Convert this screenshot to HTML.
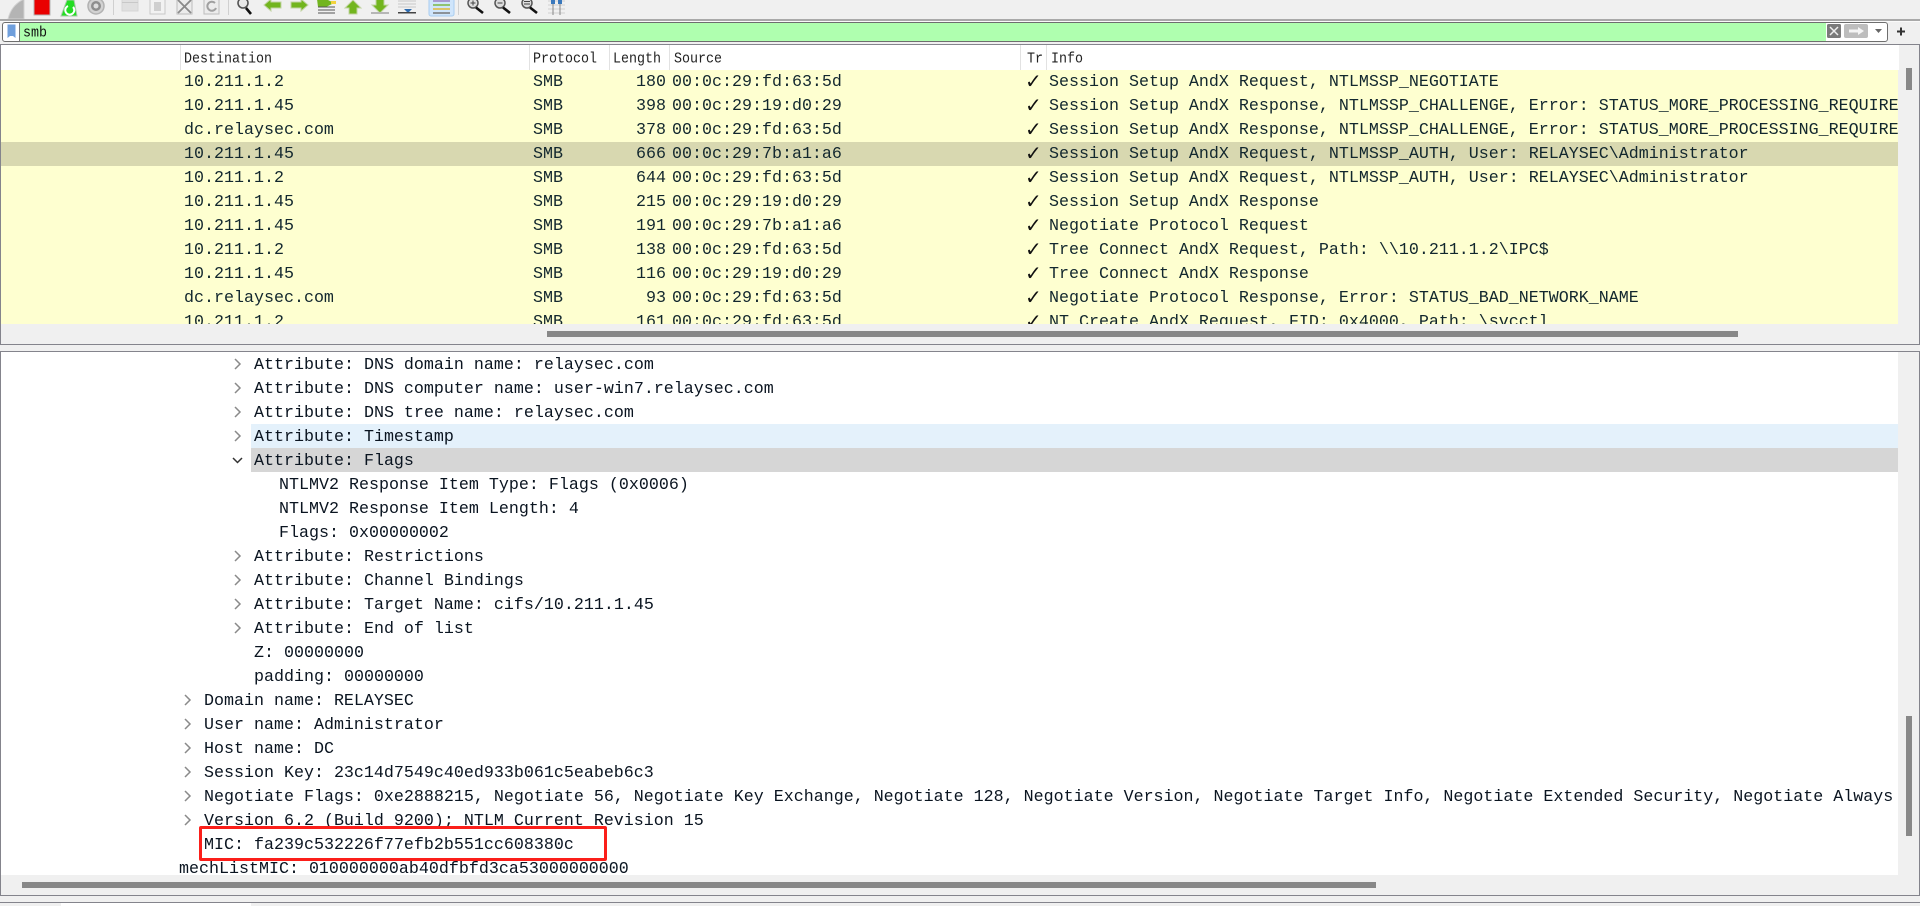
<!DOCTYPE html>
<html><head><meta charset="utf-8"><style>
html,body{margin:0;padding:0;width:1920px;height:906px;overflow:hidden;background:#f0f0f0}
*{box-sizing:border-box}
.a{position:absolute}
.t{position:absolute;font:16.667px/24px "Liberation Mono",monospace;color:#12272e;white-space:pre;height:24px}
.h{position:absolute;top:45px;height:25px;font:13.33px/29px "Liberation Mono",monospace;color:#222;white-space:pre;transform:scaleY(1.12)}
.s{position:absolute;top:45px;height:25px;width:1px;background:#e2e2e2}
.d{position:absolute;left:1px;font:16.667px/24px "Liberation Mono",monospace;color:#0a1420;white-space:pre;height:24px;margin-top:2px}
svg{position:absolute;overflow:visible}
</style></head><body>
<!-- toolbar -->
<svg class="a" style="left:0;top:0" width="600" height="20" viewBox="0 0 600 20">
<path d="M8 19C10 11 14 4 24 -1V19Z" fill="#b4b4b4" stroke="#d2d2d2"/>
<rect x="34" y="-2" width="16" height="17" fill="#e90000" stroke="#b5b5b5"/>
<path d="M61 16L67 0H74L77 16Z" fill="#22dd22" stroke="#a6c8a6"/>
<path d="M73 7a4.5 4.5 0 1 1-5-1" fill="none" stroke="#fff" stroke-width="2"/>
<circle cx="96" cy="6" r="8" fill="#d2d2d2" stroke="#b2b2b2" stroke-width="1.5"/><circle cx="96" cy="6" r="5" fill="#8e8e8e"/><circle cx="96" cy="6" r="2.5" fill="#ddd"/>
<rect x="113" y="-2" width="1" height="17" fill="#d0d0d0"/>
<path d="M122 -1H138V11H122Z" fill="#e0e0e0" stroke="#d6d6d6"/><rect x="122" y="2" width="16" height="1" fill="#c8c8c8"/>
<rect x="150" y="-1" width="15" height="15" fill="#f2f2f2" stroke="#c8c8c8"/>
<path d="M154 2h7v9h-7z" fill="#cfcfcf"/>
<rect x="177" y="-1" width="15" height="15" fill="#ececec" stroke="#bdbdbd"/><path d="M178 0L191 13M191 0L178 13" stroke="#8a8a8a" stroke-width="1.8"/>
<rect x="204" y="-1" width="15" height="15" fill="#ececec" stroke="#bdbdbd"/><path d="M215 3a4.5 4.5 0 1 0 1 5" fill="none" stroke="#a0a0a0" stroke-width="2"/>
<rect x="228" y="-2" width="1" height="17" fill="#d0d0d0"/>
<circle cx="243" cy="3" r="5" fill="#e8e8e8" stroke="#555" stroke-width="1.6"/><path d="M246 8L251 14" stroke="#111" stroke-width="2.6"/>
<path d="M264 5L271 -1V2H281V8H271V11Z" fill="#72b51e" stroke="#c2d4a4"/>
<path d="M308 5L301 -1V2H291V8H301V11Z" fill="#72b51e" stroke="#c2d4a4"/>
<path d="M317 -1H326V-1L334 3L326 7H318Z" fill="#72b51e"/><rect x="331" y="1" width="5" height="3" fill="#f2d23c"/>
<path d="M318 7H335M318 10H335M318 13H335" stroke="#555" stroke-width="1"/>
<path d="M353 0L361 8H357V14H349V8H345Z" fill="#72b51e" stroke="#c2d4a4"/>
<path d="M380 13L388 5H384V-1H376V5H372Z" fill="#72b51e" stroke="#c2d4a4"/><rect x="371" y="12" width="18" height="2" fill="#b6b6b6"/>
<path d="M398 1H416M398 4H416M398 7H416" stroke="#c8c8c8"/><path d="M404 9H412L408 13Z" fill="#2e6cb0"/><rect x="398" y="12" width="18" height="1.5" fill="#444"/>
<rect x="429" y="-2" width="25" height="18" rx="2" fill="#cfe5fb" stroke="#a8cdf0"/>
<path d="M433 1H450" stroke="#9a82c4" stroke-width="1.4"/><path d="M433 5H450" stroke="#7cb648" stroke-width="1.4"/><path d="M433 9H450" stroke="#e0b83a" stroke-width="1.4"/><path d="M433 13H450" stroke="#777" stroke-width="1.4"/>
<rect x="458" y="-2" width="1" height="17" fill="#d0d0d0"/>
<circle cx="473" cy="3" r="5" fill="#ddd" stroke="#555" stroke-width="1.5"/><path d="M476 7.5L483 13" stroke="#111" stroke-width="2.6"/><path d="M470.5 3H475.5M473 .5V5.5" stroke="#444"/>
<circle cx="500" cy="3" r="5" fill="#ddd" stroke="#555" stroke-width="1.5"/><path d="M503 7.5L510 13" stroke="#111" stroke-width="2.6"/><path d="M497.5 3H502.5" stroke="#444"/>
<circle cx="527" cy="3" r="5" fill="#ddd" stroke="#555" stroke-width="1.5"/><path d="M530 7.5L537 13" stroke="#111" stroke-width="2.6"/><path d="M524 1.5H530M524 4H530" stroke="#444"/>
<path d="M548 1H565M548 5H565M548 9H565M548 13H565" stroke="#cfcfcf"/><path d="M553 -1V15M560 -1V15" stroke="#888"/><rect x="551" y="-1" width="4" height="5" fill="#3a78bc"/><rect x="558" y="-1" width="4" height="5" fill="#3a78bc"/>
</svg>
<div class="a" style="left:0;top:19px;width:1920px;height:2px;background:#a9a9a9"></div>
<div class="a" style="left:0;top:21px;width:1920px;height:1px;background:#fafafa"></div>
<!-- filter bar -->
<div class="a" style="left:2px;top:22px;width:1886px;height:20px;border:1px solid #6e6e6e;border-radius:3px;background:#fff"></div>
<div class="a" style="left:20px;top:23px;width:1806px;height:18px;background:#afffaf"></div>
<div class="a" style="left:19px;top:23px;width:1px;height:18px;background:#777"></div>
<svg class="a" style="left:0;top:0" width="30" height="44"><path d="M7.5 24.5H15.5V38L13 36H10L7.5 38Z" fill="#6f9fdc"/></svg>
<div class="a" style="left:23px;top:24px;font:13.33px/19px 'Liberation Mono',monospace;color:#111;white-space:pre;transform:scaleY(1.12)">smb</div>
<svg class="a" style="left:0;top:0" width="1920" height="44">
<rect x="1827" y="24" width="14" height="14" rx="1.5" fill="#7a7a7a"/><path d="M1830 27L1838 35M1838 27L1830 35" stroke="#eee" stroke-width="1.5"/>
<rect x="1844" y="24" width="24" height="14" rx="2" fill="#bdbdbd"/><path d="M1849 29.5H1858V27L1864 31L1858 35V32.5H1849Z" fill="#f4f4f4"/>
<path d="M1875 29H1882L1878.5 33Z" fill="#666"/>
<path d="M1897 31.5H1905M1901 27.5V35.5" stroke="#333" stroke-width="2"/>
</svg>
<!-- packet list -->
<div class="a" style="left:0;top:44px;width:1920px;height:301px;border:1px solid #84848c;background:#f0f0f0"></div>
<div class="a" style="left:1px;top:45px;width:1898px;height:25px;background:#fff"></div>
<div class="a" style="left:1px;top:70px;width:1897px;height:254px;background:#feffd0;overflow:hidden"></div>
<div class="a" style="left:1px;top:142px;width:1897px;height:24px;background:#d8d8b0"></div>
<div class="a" style="left:1906px;top:68px;width:6px;height:22px;background:#888"></div>
<div class="a" style="left:547px;top:331px;width:1191px;height:6px;background:#888"></div>
<div class="s" style="left:180px"></div><div class="s" style="left:529px"></div><div class="s" style="left:609px"></div><div class="s" style="left:669px"></div><div class="s" style="left:1020px"></div><div class="s" style="left:1046px"></div>
<div class="h" style="left:184px">Destination</div>
<div class="h" style="left:533px">Protocol</div>
<div class="h" style="left:613px">Length</div>
<div class="h" style="left:674px">Source</div>
<div class="h" style="left:1027px">Tr</div>
<div class="h" style="left:1051px">Info</div>
<div class="a" style="left:0;top:70px;width:1898px;height:254px;overflow:hidden">
<style>.r{position:absolute;left:0;width:1898px;height:24px}.r .t{top:1px}.r .c{left:1025px;top:-1px;font-family:"DejaVu Sans",sans-serif;font-size:20px;color:#111}</style>
<div class="r" style="top:0"><span class="t" style="left:184px">10.211.1.2</span><span class="t" style="left:533px">SMB</span><span class="t" style="left:636px">180</span><span class="t" style="left:672px">00:0c:29:fd:63:5d</span><span class="t c">✓</span><span class="t" style="left:1049px">Session Setup AndX Request, NTLMSSP_NEGOTIATE</span></div>
<div class="r" style="top:24px"><span class="t" style="left:184px">10.211.1.45</span><span class="t" style="left:533px">SMB</span><span class="t" style="left:636px">398</span><span class="t" style="left:672px">00:0c:29:19:d0:29</span><span class="t c">✓</span><span class="t" style="left:1049px;width:849px;overflow:hidden">Session Setup AndX Response, NTLMSSP_CHALLENGE, Error: STATUS_MORE_PROCESSING_REQUIRED</span></div>
<div class="r" style="top:48px"><span class="t" style="left:184px">dc.relaysec.com</span><span class="t" style="left:533px">SMB</span><span class="t" style="left:636px">378</span><span class="t" style="left:672px">00:0c:29:fd:63:5d</span><span class="t c">✓</span><span class="t" style="left:1049px;width:849px;overflow:hidden">Session Setup AndX Response, NTLMSSP_CHALLENGE, Error: STATUS_MORE_PROCESSING_REQUIRED</span></div>
<div class="r" style="top:72px"><span class="t" style="left:184px">10.211.1.45</span><span class="t" style="left:533px">SMB</span><span class="t" style="left:636px">666</span><span class="t" style="left:672px">00:0c:29:7b:a1:a6</span><span class="t c">✓</span><span class="t" style="left:1049px">Session Setup AndX Request, NTLMSSP_AUTH, User: RELAYSEC\Administrator</span></div>
<div class="r" style="top:96px"><span class="t" style="left:184px">10.211.1.2</span><span class="t" style="left:533px">SMB</span><span class="t" style="left:636px">644</span><span class="t" style="left:672px">00:0c:29:fd:63:5d</span><span class="t c">✓</span><span class="t" style="left:1049px">Session Setup AndX Request, NTLMSSP_AUTH, User: RELAYSEC\Administrator</span></div>
<div class="r" style="top:120px"><span class="t" style="left:184px">10.211.1.45</span><span class="t" style="left:533px">SMB</span><span class="t" style="left:636px">215</span><span class="t" style="left:672px">00:0c:29:19:d0:29</span><span class="t c">✓</span><span class="t" style="left:1049px">Session Setup AndX Response</span></div>
<div class="r" style="top:144px"><span class="t" style="left:184px">10.211.1.45</span><span class="t" style="left:533px">SMB</span><span class="t" style="left:636px">191</span><span class="t" style="left:672px">00:0c:29:7b:a1:a6</span><span class="t c">✓</span><span class="t" style="left:1049px">Negotiate Protocol Request</span></div>
<div class="r" style="top:168px"><span class="t" style="left:184px">10.211.1.2</span><span class="t" style="left:533px">SMB</span><span class="t" style="left:636px">138</span><span class="t" style="left:672px">00:0c:29:fd:63:5d</span><span class="t c">✓</span><span class="t" style="left:1049px">Tree Connect AndX Request, Path: \\10.211.1.2\IPC$</span></div>
<div class="r" style="top:192px"><span class="t" style="left:184px">10.211.1.45</span><span class="t" style="left:533px">SMB</span><span class="t" style="left:636px">116</span><span class="t" style="left:672px">00:0c:29:19:d0:29</span><span class="t c">✓</span><span class="t" style="left:1049px">Tree Connect AndX Response</span></div>
<div class="r" style="top:216px"><span class="t" style="left:184px">dc.relaysec.com</span><span class="t" style="left:533px">SMB</span><span class="t" style="left:646px">93</span><span class="t" style="left:672px">00:0c:29:fd:63:5d</span><span class="t c">✓</span><span class="t" style="left:1049px">Negotiate Protocol Response, Error: STATUS_BAD_NETWORK_NAME</span></div>
<div class="r" style="top:240px"><span class="t" style="left:184px">10.211.1.2</span><span class="t" style="left:533px">SMB</span><span class="t" style="left:636px">161</span><span class="t" style="left:672px">00:0c:29:fd:63:5d</span><span class="t c">✓</span><span class="t" style="left:1049px">NT Create AndX Request, FID: 0x4000, Path: \svcctl</span></div>
</div>
<!-- details -->
<div class="a" style="left:0;top:351px;width:1920px;height:545px;border:1px solid #84848c;background:#f0f0f0"></div>
<div class="a" style="left:1px;top:352px;width:1897px;height:523px;background:#fff"></div>
<div class="a" style="left:251px;top:424px;width:1647px;height:24px;background:#e4f1fb"></div>
<div class="a" style="left:251px;top:448px;width:1647px;height:24px;background:#d6d6d6"></div>
<div class="a" style="left:1906px;top:716px;width:6px;height:120px;background:#888"></div>
<div class="a" style="left:22px;top:882px;width:1354px;height:6px;background:#888"></div>
<div class="a" style="left:0;top:352px;width:1898px;height:523px;overflow:hidden">
<div class="d" style="left:254px;top:0">Attribute: DNS domain name: relaysec.com</div>
<div class="d" style="left:254px;top:24px">Attribute: DNS computer name: user-win7.relaysec.com</div>
<div class="d" style="left:254px;top:48px">Attribute: DNS tree name: relaysec.com</div>
<div class="d" style="left:254px;top:72px">Attribute: Timestamp</div>
<div class="d" style="left:254px;top:96px">Attribute: Flags</div>
<div class="d" style="left:279px;top:120px">NTLMV2 Response Item Type: Flags (0x0006)</div>
<div class="d" style="left:279px;top:144px">NTLMV2 Response Item Length: 4</div>
<div class="d" style="left:279px;top:168px">Flags: 0x00000002</div>
<div class="d" style="left:254px;top:192px">Attribute: Restrictions</div>
<div class="d" style="left:254px;top:216px">Attribute: Channel Bindings</div>
<div class="d" style="left:254px;top:240px">Attribute: Target Name: cifs/10.211.1.45</div>
<div class="d" style="left:254px;top:264px">Attribute: End of list</div>
<div class="d" style="left:254px;top:288px">Z: 00000000</div>
<div class="d" style="left:254px;top:312px">padding: 00000000</div>
<div class="d" style="left:204px;top:336px">Domain name: RELAYSEC</div>
<div class="d" style="left:204px;top:360px">User name: Administrator</div>
<div class="d" style="left:204px;top:384px">Host name: DC</div>
<div class="d" style="left:204px;top:408px">Session Key: 23c14d7549c40ed933b061c5eabeb6c3</div>
<div class="d" style="left:204px;top:432px">Negotiate Flags: 0xe2888215, Negotiate 56, Negotiate Key Exchange, Negotiate 128, Negotiate Version, Negotiate Target Info, Negotiate Extended Security, Negotiate Always</div>
<div class="d" style="left:204px;top:456px">Version 6.2 (Build 9200); NTLM Current Revision 15</div>
<div class="d" style="left:204px;top:480px">MIC: fa239c532226f77efb2b551cc608380c</div>
<div class="d" style="left:179px;top:504px">mechListMIC: 010000000ab40dfbfd3ca53000000000</div>
</div>
<svg class="a" style="left:0;top:0" width="400" height="906" fill="none" stroke="#8a8a8a" stroke-width="1.5">
<path d="M235 359L240 364L235 369M235 383L240 388L235 393M235 407L240 412L235 417M235 431L240 436L235 441"/>
<path d="M233 458L237.500 462.500L242 458" stroke="#333"/>
<path d="M235 551L240 556L235 561M235 575L240 580L235 585M235 599L240 604L235 609M235 623L240 628L235 633"/>
<path d="M185 695L190 700L185 705M185 719L190 724L185 729M185 743L190 748L185 753M185 767L190 772L185 777M185 791L190 796L185 801M185 815L190 820L185 825"/>
</svg>
<!-- red box -->
<div class="a" style="left:199px;top:826px;width:408px;height:35px;border:3px solid #fb1f1a;border-radius:2px"></div>
<!-- bottom panel -->
<div class="a" style="left:0;top:902px;width:1920px;height:1px;background:#84848c"></div>
<div class="a" style="left:0;top:903px;width:1920px;height:3px;background:#f0f0f0"></div>
<div class="a" style="left:61px;top:903px;width:190px;height:3px;background:#fff"></div>
</body></html>
